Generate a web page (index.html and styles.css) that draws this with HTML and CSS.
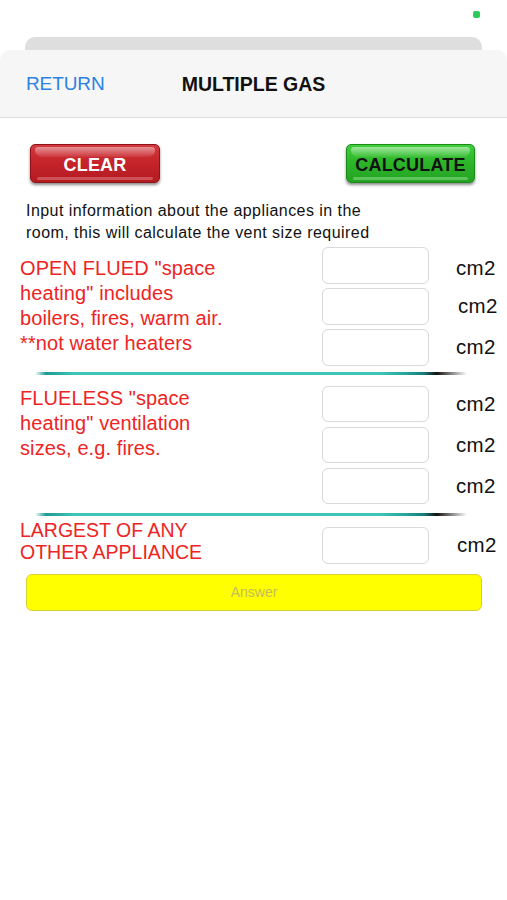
FILE: index.html
```html
<!DOCTYPE html>
<html>
<head>
<meta charset="utf-8">
<link rel="stylesheet" href="styles.css">
</head>
<body>
<div class="status"><span class="dot"></span></div>
<div class="behind"></div>
<div class="nav">
  <span class="back">RETURN</span>
  <span class="title">MULTIPLE GAS</span>
</div>
<main class="content">
  <div class="btns">
    <div class="btn red">CLEAR</div>
    <div class="btn green">CALCULATE</div>
  </div>
  <p class="intro">Input information about the appliances in the<br>room, this will calculate the vent size required</p>

  <section class="sec s1">
    <div class="label">OPEN FLUED "space<br>heating" includes<br>boilers, fires, warm air.<br>**not water heaters</div>
    <div class="inputs">
      <div class="row"><div class="box"></div><span class="unit">cm2</span></div>
      <div class="row"><div class="box"></div><span class="unit">cm2</span></div>
      <div class="row"><div class="box"></div><span class="unit">cm2</span></div>
    </div>
  </section>
  <div class="divider d1"></div>

  <section class="sec s2">
    <div class="label">FLUELESS "space<br>heating" ventilation<br>sizes, e.g. fires.</div>
    <div class="inputs">
      <div class="row"><div class="box"></div><span class="unit">cm2</span></div>
      <div class="row"><div class="box"></div><span class="unit">cm2</span></div>
      <div class="row"><div class="box"></div><span class="unit">cm2</span></div>
    </div>
  </section>
  <div class="divider d2"></div>

  <section class="sec s3">
    <div class="label">LARGEST OF ANY<br>OTHER APPLIANCE</div>
    <div class="inputs">
      <div class="row"><div class="box"></div><span class="unit">cm2</span></div>
    </div>
  </section>

  <div class="answer">Answer</div>
</main>
</body>
</html>
```

FILE: styles.css
```css
* { box-sizing: border-box; }
html, body { margin: 0; padding: 0; background: #fff; }
body { font-family: "Liberation Sans", Arial, sans-serif; width: 507px; height: 900px; overflow: hidden; }

.status { height: 37px; display: flex; justify-content: flex-end; padding: 11px 27px 0 0; }
.dot { width: 7px; height: 7px; background: #2fcb5a; border-radius: 2px; }

.behind { height: 13px; margin: 0 25px; background: #dedede; border-radius: 10px 10px 0 0; }

.nav {
  height: 68px; background: #f6f6f6; border-radius: 10px 10px 0 0;
  border-bottom: 1px solid #dcdcdc; position: relative;
  display: flex; align-items: center; padding: 0 0 0 26px;
}
.back { color: #2a82e4; font-size: 19px; letter-spacing: -0.1px; line-height: 24px; margin-top: 1px; }
.title {
  position: absolute; left: 0; right: 0; text-align: center; top: 22px;
  font-size: 19.5px; font-weight: 700; color: #111; line-height: 24px;
}

.content { padding-top: 26px; }
.btns { display: flex; justify-content: space-between; padding: 0 32px 0 30px; }
.btn {
  width: 130px; height: 39px; border-radius: 5px; position: relative;
  display: flex; align-items: center; justify-content: center;
  padding-top: 4px;
  font-weight: 700; font-size: 18px; letter-spacing: 0.2px;
  box-shadow: 0 2px 3px rgba(0,0,0,0.45);
  overflow: hidden;
}
.btn::before {
  content: ""; position: absolute; left: 4px; right: 4px; top: 2px; height: 10px;
  border-radius: 4px 4px 8px 8px;
}
.btn::after {
  content: ""; position: absolute; left: 6px; right: 6px; bottom: 2px; height: 3px;
  border-radius: 2px;
}
.red { background: linear-gradient(#d33a3f 0%, #c5252b 45%, #b31b21 100%); color: #fff; border: 1px solid #8e1418; }
.red::before { background: linear-gradient(rgba(255,255,255,0.45), rgba(255,255,255,0.05)); }
.red::after { background: rgba(255,180,180,0.35); }
.green { background: linear-gradient(#3fcf3a 0%, #2db62a 45%, #24a322 100%); color: #111; border: 1px solid #1b8a1b; width: 129px; }
.green::before { background: linear-gradient(rgba(255,255,255,0.5), rgba(255,255,255,0.05)); }
.green::after { background: rgba(200,255,200,0.35); }

.intro { margin: 17px 0 0 26px; font-size: 16px; letter-spacing: 0.45px; line-height: 22px; color: #111; }

.sec { display: flex; }
.label { flex: 1; padding-left: 20px; color: #ee2424; font-size: 20px; letter-spacing: 0.1px; line-height: 25px; white-space: nowrap; }
.inputs { width: 185px; flex: none; display: flex; flex-direction: column; gap: 4.5px; }
.row { display: flex; align-items: center; }
.box { width: 107px; height: 36.5px; border: 1px solid #d9d9d9; border-radius: 6px; background: #fff; }
.unit { margin-left: 27px; font-size: 20.5px; letter-spacing: 0.3px; color: #111; line-height: 24px; }

.s1 { margin-top: 3px; }
.s1 .label { padding-top: 9px; }
.s1 .row:nth-child(1) .unit { margin-top: 5px; }
.s1 .row:nth-child(2) .unit { margin-left: 29px; }

.s2 { margin-top: 11px; }

.s3 { margin-top: 2px; }
.s3 .label { font-size: 19.5px; letter-spacing: 0; line-height: 22px; padding-top: 1px; }
.s3 .inputs { padding-top: 9px; }
.s3 .unit { margin-left: 28px; }

.divider {
  height: 3px; margin: 6px 40px 0 35px;
  background: linear-gradient(to right, rgba(40,150,145,0) 0%, #1f9994 2.5%, #3ec3bb 9%, #3ec3bb 80%, #23a39c 86%, #187d78 90%, #111 93%, rgba(0,0,0,0) 100%);
}
.d2 { margin-top: 9px; }

.answer {
  margin: 10px 25px 0 26px; height: 37px; background: #ffff00;
  border: 1px solid #d8cf3a; border-radius: 6px;
  display: flex; align-items: center; justify-content: center;
  font-size: 14px; color: #c4bd5a;
}
```
